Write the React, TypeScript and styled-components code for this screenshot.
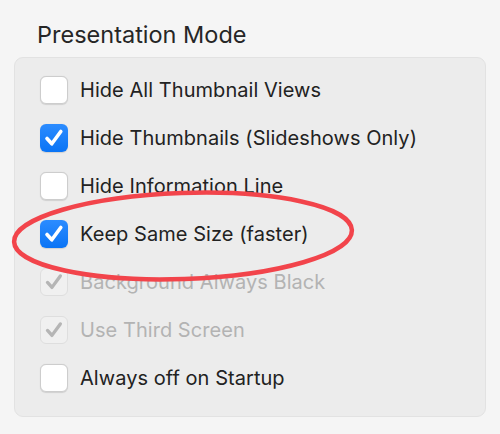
import React from "react";
import styled, { createGlobalStyle } from "styled-components";

const Global = createGlobalStyle`
  html, body { margin: 0; padding: 0; background: #f5f5f5; }
  body { font-family: Inter, "Noto Sans", "Liberation Sans", sans-serif; -webkit-font-smoothing: antialiased; }
`;

const Page = styled.div`
  position: relative;
  width: 500px;
  height: 434px;
  padding: 20px 14px 0 14px;
  box-sizing: border-box;
  background: #f5f5f5;
`;

const Title = styled.div`
  padding-left: 23px;
  font-size: 23.5px;
  line-height: 29px;
  color: #262626;
  height: 37px;
`;

const Panel = styled.div`
  width: 472px;
  height: 360px;
  box-sizing: border-box;
  background: #ececec;
  border: 1px solid #e2e2e2;
  border-radius: 9px;
  padding: 8px 0 0 25px;
  display: flex;
  flex-direction: column;
`;

const Row = styled.div<{ $disabled?: boolean }>`
  height: 48px;
  display: flex;
  align-items: center;
  gap: 12px;
  font-size: 20px;
  letter-spacing: 0.05px;
  color: ${(p) => (p.$disabled ? "#b3b3b3" : "#222222")};
`;

const Box = styled.div<{ $checked?: boolean; $disabled?: boolean }>`
  width: 28px;
  height: 28px;
  box-sizing: border-box;
  border-radius: 6px;
  display: flex;
  align-items: center;
  justify-content: center;
  background: ${(p) =>
    p.$disabled
      ? "#f0f0f0"
      : p.$checked
      ? "linear-gradient(#2c8cff, #0a74f5)"
      : "#ffffff"};
  border: ${(p) =>
    p.$checked && !p.$disabled ? "none" : `1px solid ${p.$disabled ? "#dedede" : "#cdcdcd"}`};
  box-shadow: ${(p) => (p.$disabled ? "none" : "0 0.5px 1px rgba(0,0,0,0.12)")};
`;

const Overlay = styled.svg`
  position: absolute;
  left: 0;
  top: 0;
  pointer-events: none;
`;

const Check = ({ color }: { color: string }) => (
  <svg width="28" height="28" viewBox="0 0 28 28">
    <path
      d="M7 14.5 L11.8 19.8 L20.8 7.5"
      fill="none"
      stroke={color}
      strokeWidth="3.6"
      strokeLinecap="round"
      strokeLinejoin="round"
    />
  </svg>
);

const items: { label: string; checked: boolean; disabled?: boolean }[] = [
  { label: "Hide All Thumbnail Views", checked: false },
  { label: "Hide Thumbnails (Slideshows Only)", checked: true },
  { label: "Hide Information Line", checked: false },
  { label: "Keep Same Size (faster)", checked: true },
  { label: "Background Always Black", checked: true, disabled: true },
  { label: "Use Third Screen", checked: true, disabled: true },
  { label: "Always off on Startup", checked: false },
];

export default function App() {
  return (
    <>
      <Global />
      <Page>
        <Title>Presentation Mode</Title>
        <Panel>
          {items.map((it) => (
            <Row key={it.label} $disabled={it.disabled}>
              <Box $checked={it.checked} $disabled={it.disabled}>
                {it.checked && <Check color={it.disabled ? "#b5b5b5" : "#ffffff"} />}
              </Box>
              {it.label}
            </Row>
          ))}
        </Panel>
        <Overlay width="500" height="434" viewBox="0 0 500 434">
          <ellipse
            cx="183"
            cy="236"
            rx="169"
            ry="43"
            transform="rotate(-2 183 236)"
            fill="none"
            stroke="#f2444b"
            strokeWidth="4.5"
          />
        </Overlay>
      </Page>
    </>
  );
}
